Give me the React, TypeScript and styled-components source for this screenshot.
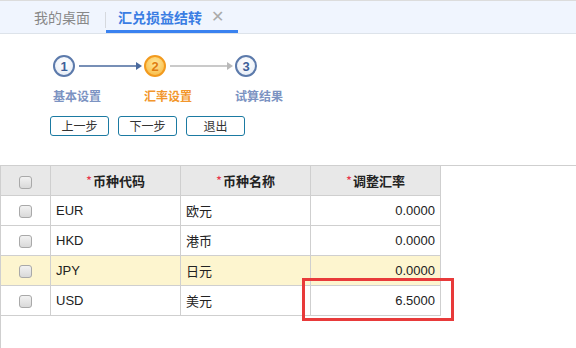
import React, { useState } from "react";
import styled, { createGlobalStyle } from "styled-components";

const GlobalStyle = createGlobalStyle`
  html, body {
    margin: 0;
    padding: 0;
    background: #fff;
    font-family: "Liberation Sans", Arial, "Noto Sans CJK SC", sans-serif;
    font-size: 13px;
    color: #222;
  }
`;

const Page = styled.div`
  width: 576px;
  height: 348px;
  overflow: hidden;
  display: flex;
  flex-direction: column;
`;

const TabBar = styled.div`
  height: 32px;
  background: #f0f5fe;
  border-top: 1px solid #dcdcdc;
  border-bottom: 1px solid #dde3ea;
  display: flex;
  align-items: stretch;
  padding-left: 22px;
`;

const Tab = styled.div<{ active?: boolean }>`
  display: flex;
  align-items: center;
  gap: 9px;
  padding: 2px 12px 0;
  font-family: "Noto Sans CJK SC", sans-serif;
  font-size: 14px;
  color: ${(p) => (p.active ? "#3a7de3" : "#888")};
  font-weight: ${(p) => (p.active ? 600 : 400)};
  border-bottom: 3px solid ${(p) => (p.active ? "#3a82f0" : "transparent")};
  padding-right: ${(p) => (p.active ? "14px" : "15px")};
`;

const TabSep = styled.div`
  width: 1px;
  background: #d6d9de;
  margin: 11px 0 5px;
`;

const Close = styled.span`
  color: #aaa;
  font-size: 16px;
  font-weight: 400;
  font-family: "Liberation Sans", sans-serif;
`;

const Wizard = styled.div`
  padding: 20px 0 0 50px;
  height: 132px;
  border-bottom: 1px solid #cfcfcf;
  box-sizing: border-box;
`;

const Steps = styled.div`
  display: grid;
  grid-template-columns: repeat(3, 91px);
  margin-left: 3px;
`;

const Step = styled.div`
  display: flex;
  flex-direction: column;
  gap: 9px;
`;

const StepTop = styled.div`
  display: flex;
  align-items: center;
  height: 24px;
`;

const Circle = styled.div<{ current?: boolean }>`
  width: 18px;
  height: 18px;
  border-radius: 50%;
  border: 2px solid ${(p) => (p.current ? "#f29a1e" : "#5c7aab")};
  background: ${(p) =>
    p.current
      ? "radial-gradient(circle at 50% 35%, #ffe89a, #f7b53c)"
      : "radial-gradient(circle at 50% 35%, #ffffff, #e4ebf5)"};
  color: ${(p) => (p.current ? "#e07d10" : "#3d5f99")};
  font-family: "Liberation Sans", sans-serif;
  font-weight: 700;
  font-size: 13px;
  display: flex;
  align-items: center;
  justify-content: center;
  flex: none;
`;

const StepLabel = styled.div<{ current?: boolean }>`
  font-family: "Noto Sans CJK SC", sans-serif;
  font-size: 12px;
  font-weight: 600;
  color: ${(p) => (p.current ? "#f2962c" : "#7c93c2")};
`;

const Arrow = ({ color }: { color: string }) => (
  <svg width="64" height="10" viewBox="0 0 64 10" style={{ marginLeft: 4 }}>
    <line x1="0" y1="5" x2="58" y2="5" stroke={color} strokeWidth="1.5" />
    <path d="M57 1 L63 5 L57 9 Z" fill={color} />
  </svg>
);

const Buttons = styled.div`
  display: flex;
  gap: 9px;
  margin-top: 12px;
`;

const Btn = styled.button`
  width: 59px;
  height: 20px;
  box-sizing: border-box;
  border: 1px solid #1b7aa2;
  border-radius: 3px;
  background: #fff;
  font-family: "Noto Sans CJK SC", sans-serif;
  font-size: 12px;
  color: #333;
  padding: 0;
  line-height: 18px;
`;

const GridArea = styled.div`
  flex: 1;
  border-left: 1px solid #cfcfcf;
`;

const Table = styled.table`
  border-collapse: collapse;
  table-layout: fixed;
  margin-left: -1px;
`;

const Th = styled.th<{ w: number }>`
  width: ${(p) => p.w}px;
  height: 29px;
  background: #e8e8e8;
  border: 1px solid #cfcfcf;
  border-top: none;
  font-family: "Noto Sans CJK SC", sans-serif;
  font-size: 13px;
  font-weight: 700;
  color: #222;
  text-align: center;
  padding: 0;
`;

const Star = styled.span`
  color: #e8364d;
  font-weight: 400;
  margin-right: 1px;
`;

const Tr = styled.tr<{ hl?: boolean }>`
  background: ${(p) => (p.hl ? "#fdf5cf" : "#fff")};
`;

const Td = styled.td<{ align?: string }>`
  height: 29px;
  border: 1px solid #cfcfcf;
  padding: 0 5px;
  text-align: ${(p) => p.align || "left"};
  font-family: "Liberation Sans", "Noto Sans CJK SC", sans-serif;
  font-size: 13px;
  color: #222;
  position: relative;
`;

const CheckCell = styled.td`
  height: 29px;
  border: 1px solid #cfcfcf;
  text-align: center;
  padding: 0;
`;

const Check = styled.span`
  display: inline-block;
  width: 11px;
  height: 11px;
  border: 1px solid #a9a9a9;
  border-radius: 3px;
  background: linear-gradient(#f2f2f2, #d9d9d9);
  vertical-align: middle;
`;

const Highlight = styled.div`
  position: absolute;
  left: -9px;
  right: -14px;
  top: -8px;
  bottom: -6px;
  border: 3px solid #e83a3a;
  pointer-events: none;
`;

const rows = [
  { code: "EUR", name: "欧元", rate: "0.0000" },
  { code: "HKD", name: "港币", rate: "0.0000" },
  { code: "JPY", name: "日元", rate: "0.0000", hl: true },
  { code: "USD", name: "美元", rate: "6.5000", mark: true },
];

export default function App() {
  const [step] = useState(2);
  const steps = ["基本设置", "汇率设置", "试算结果"];

  return (
    <Page>
      <GlobalStyle />
      <TabBar>
        <Tab>我的桌面</Tab>
        <TabSep />
        <Tab active>
          汇兑损益结转<Close>✕</Close>
        </Tab>
      </TabBar>

      <Wizard>
        <Steps>
          {steps.map((label, i) => (
            <Step key={label}>
              <StepTop>
                <Circle current={i + 1 === step}>{i + 1}</Circle>
                {i < 2 && <Arrow color={i + 1 < step ? "#4a6a9e" : "#b9b9b9"} />}
              </StepTop>
              <StepLabel current={i + 1 === step}>{label}</StepLabel>
            </Step>
          ))}
        </Steps>
        <Buttons>
          <Btn>上一步</Btn>
          <Btn>下一步</Btn>
          <Btn>退出</Btn>
        </Buttons>
      </Wizard>

      <GridArea>
        <Table>
          <thead>
            <tr>
              <Th w={49}>
                <Check />
              </Th>
              <Th w={129}>
                <Star>*</Star>币种代码
              </Th>
              <Th w={129}>
                <Star>*</Star>币种名称
              </Th>
              <Th w={129}>
                <Star>*</Star>调整汇率
              </Th>
            </tr>
          </thead>
          <tbody>
            {rows.map((r) => (
              <Tr key={r.code} hl={r.hl}>
                <CheckCell>
                  <Check />
                </CheckCell>
                <Td>{r.code}</Td>
                <Td>{r.name}</Td>
                <Td align="right">
                  {r.rate}
                  {r.mark && <Highlight />}
                </Td>
              </Tr>
            ))}
          </tbody>
        </Table>
      </GridArea>
    </Page>
  );
}
